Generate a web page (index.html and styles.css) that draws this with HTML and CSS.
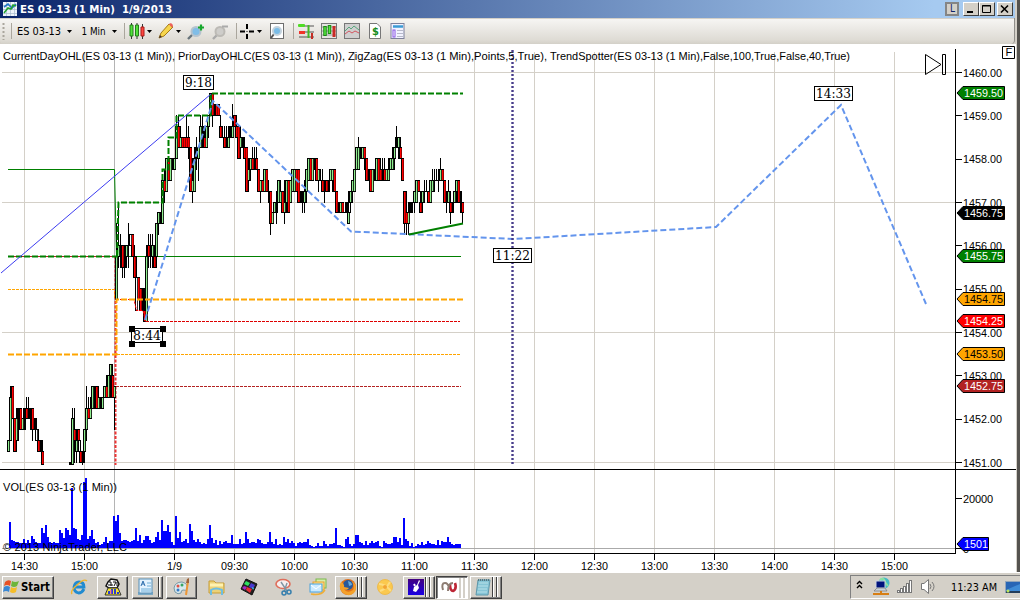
FILE: index.html
```html
<!DOCTYPE html>
<html lang="en">
<head>
<meta charset="utf-8">
<title>ES 03-13 (1 Min) 1/9/2013</title>
<link rel="stylesheet" href="styles.css">
</head>
<body>
<div class="window">
  <header class="titlebar">
    <svg class="app-icon" width="14" height="14" viewBox="0 0 14 14"><rect width="14" height="14" fill="#eef4fa"/><path d="M0 3.5H14M0 7.5H14M0 11.5H14M3.5 0V14M7.5 0V14M11.5 0V14" stroke="#a9bccf" stroke-width=".7"/><path d="M1 5L5 2L9 6L13 2" fill="none" stroke="#2176c9" stroke-width="1.6"/><path d="M1 11L5 6L8 7L10 3L13 4" fill="none" stroke="#21a32d" stroke-width="1.5"/></svg>
    <svg class="title-text" width="160" height="18"><text x="0" y="13" textLength="152" lengthAdjust="spacingAndGlyphs" xml:space="preserve">ES 03-13 (1 Min)  1/9/2013</text></svg>
    <div class="caption-buttons">
      <span class="cap link-btn">L</span>
      <span class="cap"><svg width="12" height="10"><path d="M2 8H8" stroke="#000" stroke-width="2"/></svg></span>
      <span class="cap"><svg width="12" height="10"><path d="M1.500 1.500H9.500V8.500H1.500ZM1 2H10" fill="none" stroke="#000"/></svg></span>
      <span class="cap close"><svg width="12" height="10"><path d="M2 1.500L9 8.500M9 1.500L2 8.500" stroke="#000" stroke-width="1.600"/></svg></span>
    </div>
  </header>

  <nav class="toolbar">
    <svg width="13" height="26"><path d="M3.500 5V22" stroke="#aaa69d" stroke-width="2" stroke-dasharray="2 2"/><path d="M11.500 5V21" stroke="#aaa69d"/></svg>
    <svg width="62" height="26"><text x="4" y="17" textLength="44" lengthAdjust="spacingAndGlyphs">ES 03-13</text><path d="M54 12H59L56.500 15Z"/></svg>
    <svg width="50" height="26"><text x="6.500" y="17" textLength="24" lengthAdjust="spacingAndGlyphs">1 Min</text><path d="M37 12H42L39.500 15Z"/><path d="M49.500 5V21" stroke="#aaa69d"/></svg>
    <svg width="30" height="26"><path d="M6.500 5V21M12 5V21M17.500 6V21" stroke="#333"/><path d="M5 7H8V18H5Z" fill="#50e33a" stroke="#257c1c"/><path d="M10.500 7H13.500V18H10.500Z" fill="#50e33a" stroke="#257c1c"/><path d="M16 9H19V18H16Z" fill="#ff4740" stroke="#a71c18"/><path d="M22 12H27L24.500 15Z"/></svg>
    <svg width="30" height="26"><path d="M4 20L6 15L14 6L18 9L9 18Z" fill="#f6d54c" stroke="#a47b17"/><path d="M14 6L16 5L18 7L17 10Z" fill="#ed625c"/><path d="M4 20L5 17L7 19Z" fill="#433"/><path d="M21 12H26L23.500 15Z"/></svg>
    <svg width="26" height="26"><path d="M3 21L8 16" stroke="#68747b" stroke-width="2.400"/><circle cx="11" cy="13.500" r="4.500" fill="#80bde7" stroke="#b5c3ce" stroke-width="2"/><path d="M13 9.500H19M16 6.500V12.500" stroke="#16a72d" stroke-width="2.200"/></svg>
    <svg width="29" height="26"><path d="M2 21L7 16" stroke="#aaa" stroke-width="2.400"/><circle cx="9" cy="13.500" r="4.500" fill="#cecdca" stroke="#bcbab5" stroke-width="2"/><path d="M11 8.500H17" stroke="#aaa" stroke-width="2"/><path d="M25.500 5V21" stroke="#aaa69d"/></svg>
    <svg width="28" height="26"><path d="M0 13.500H5M9 13.500H14M7 6V11M7 16V21" stroke="#000" stroke-width="2"/><path d="M6.500 13.500H7.500" stroke="#000"/><path d="M17 12H22L19.500 15Z"/></svg>
    <svg width="30" height="26"><rect x="2.500" y="5.500" width="13" height="15" fill="#fff" stroke="#6e6e6e"/><path d="M3 20L6 16" stroke="#555" stroke-width="2"/><circle cx="9" cy="13" r="4" fill="#79bce7" stroke="#c2d2dd" stroke-width="2"/><path d="M25.500 5V21" stroke="#aaa69d"/></svg>
    <svg width="23" height="26"><path d="M1 8H16M1 14H16M1 19H16" stroke="#555"/><rect x="0" y="6" width="7" height="3" rx="1" fill="#4fdc24"/><rect x="1" y="13" width="6" height="3" fill="#f13329"/><path d="M10.500 7V20" stroke="#44b925" stroke-width="2"/><path d="M14 15V21" stroke="#c52d24" stroke-width="2"/></svg>
    <svg width="23" height="26"><rect x=".5" y="5.500" width="15" height="15" fill="#e5e5e1" stroke="#777"/><path d="M1 9H15M1 13H15M1 17H15" stroke="#999"/><path d="M4 8V18M8.500 7V16" stroke="#1b8715" stroke-width="3.500"/><path d="M4 9V17M8.500 8V15" stroke="#55e83e" stroke-width="1.500"/><path d="M13 8V19" stroke="#c92a25" stroke-width="3"/></svg>
    <svg width="23" height="26"><rect x=".5" y="5.500" width="15" height="15" fill="#cfcfcf" stroke="#777"/><path d="M1 13L5 9L7 11L10 8L15 12" fill="none" stroke="#58a77c"/><path d="M1 16L5 13L8 15L11 13L15 15" fill="none" stroke="#d35560"/></svg>
    <svg width="23" height="26"><path d="M2.500 5.500H10L13.500 9V20.500H2.500Z" fill="#fff" stroke="#777"/><text class="dollar" x="5" y="17">$</text></svg>
    <svg width="20" height="26"><rect x="1" y="5.500" width="13" height="15" fill="#f2f3ff" stroke="#7d809a"/><path d="M3 8.500H13" stroke="#3b9bd5" stroke-width="2.500"/><rect x="3" y="12" width="2" height="7" fill="#fff" stroke="#8653e5"/><path d="M7 12.500H13M7 15.500H13M7 18.500H13" stroke="#b7b9ca"/></svg>
  </nav>

  <svg class="chart" id="chart" width="1016" height="528" viewBox="0 44 1016 528"></svg>
</div>

<footer class="taskbar">
  <div class="task start"><svg width="52" height="23"><path d="M3 6Q6 3 9 5L8 10Q5 8 2 10Z" fill="#e85125"/><path d="M10 5Q13 7 17 5L15 10Q12 12 9 10Z" fill="#6eb53b"/><path d="M2 11Q5 9 8 11L7 16Q4 14 1 16Z" fill="#3987d4"/><path d="M9 11Q12 13 15 11L14 16Q11 18 8 16Z" fill="#f5bd28"/><text x="19" y="15" textLength="29" lengthAdjust="spacingAndGlyphs">Start</text></svg></div>
  <svg class="ico browser" viewBox="0 0 18 18"><path d="M14 11Q12 15 8.500 15Q4 14 4 9Q5 4 9 4Q14 4 14 9H5" fill="none" stroke="#218bd0" stroke-width="2.800"/><path d="M2 16Q0 13 7 7Q14 0 17 3" fill="none" stroke="#f1b52b" stroke-width="1.400"/></svg>
  <div class="task"><svg class="ico" viewBox="0 0 18 18"><path d="M4 4L7 1L13 2L15 6L13 10H5L2 8Z" fill="#fff" stroke="#111" stroke-width="1.500"/><path d="M5 4H7V8M9 4H12L10 8M4 7H9M13 4V8" fill="none" stroke="#111"/><path d="M4 10H14L17 17H1Z" fill="#f6e62c" stroke="#333"/><path d="M5 16V13M8 16V11M11 16V11M14 16V14" stroke="#293cd0" stroke-width="2"/><path d="M7 16V12" stroke="#e33bc2"/></svg></div>
  <div class="task stack one"><svg class="ico" viewBox="0 0 18 18"><path d="M2 14H17V17H2Z" fill="#7ca9c4"/><rect x="3" y="1" width="13" height="14" fill="#e3f2fd" stroke="#5690b9"/><path d="M11 5H15M11 8H15M5 11H15M5 13H15" stroke="#6eafd8"/><path d="M5 8L7 3L9 8M6 6H8" fill="none" stroke="#2d6dac"/></svg></div>
  <div class="task"><svg class="ico" viewBox="0 0 18 18"><path d="M1 10Q2 4 9 4Q16 6 14 11Q13 13 10 12Q8 12 8 15Q5 17 2 14Z" fill="#d7e8ed" stroke="#7798a5"/><circle cx="5" cy="8" r="1.500" fill="#df5347"/><circle cx="9" cy="7" r="1.500" fill="#37a563"/><circle cx="5" cy="12" r="1.500" fill="#377ac6"/><path d="M15 3L13 17" stroke="#ec9634" stroke-width="2"/><path d="M14 1L16 0V5H13Z" fill="#9e643b"/></svg></div>
  <svg class="ico" viewBox="0 0 18 18"><path d="M2 3H7L9 5H17V15H2Z" fill="#ecd179" stroke="#c79d36"/><path d="M3 7H16" stroke="#fff2b0" stroke-width="3"/><path d="M4 17V12Q9 9 15 12V17" fill="none" stroke="#6ebee1" stroke-width="2"/></svg>
  <svg class="ico" viewBox="0 0 18 18"><path d="M6 1L17 6L12 17L1 11Z" fill="#222" stroke="#111"/><path d="M6 3L10 5L8 8L4 6Z" fill="#2de061"/><path d="M11 5L15 7L13 11L9 9Z" fill="#4a3ad0"/><path d="M4 8L7 9L5 12L2 10Z" fill="#a528c8"/><path d="M7 9L12 11L10 15L6 12Z" fill="#e32d36"/><path d="M12 9L14 10L13 12Z" fill="#34d8e0"/></svg>
  <svg class="ico" viewBox="0 0 18 18"><ellipse cx="8" cy="6" rx="7" ry="4.500" fill="#f6eeee" stroke="#df6e5b" stroke-width="1.600"/><path d="M6 4L12 13M12 5L9 14" stroke="#8095a4" stroke-width="1.400"/><circle cx="14" cy="14" r="2" fill="none" stroke="#367fad" stroke-width="1.500"/><circle cx="9" cy="15" r="2" fill="none" stroke="#367fad" stroke-width="1.500"/></svg>
  <svg class="ico" viewBox="0 0 18 18"><rect x="7" y="1" width="10" height="9" fill="#d9edaa" stroke="#79b94c"/><rect x="4" y="4" width="11" height="8" fill="#ffe392" stroke="#e7a02e"/><rect x="1" y="6" width="12" height="8" fill="#cbeaff" stroke="#4aa2dc"/><path d="M2 7L7 11L12 7" fill="none" stroke="#fff"/><path d="M2 16Q12 18 16 12" fill="none" stroke="#efae38" stroke-width="1.500"/></svg>
  <div class="task stack three"><svg class="ico" viewBox="0 0 18 18"><circle cx="9" cy="9" r="8" fill="#de701c"/><circle cx="9" cy="7" r="5" fill="#28589b"/><path d="M2 4Q6 6 5 9L10 10Q8 13 5 11Q8 16 14 12Q16 8 13 3Q20 9 15 15Q9 20 3 14Q-1 9 2 4Z" fill="#f4a12a"/><path d="M9 3Q13 4 13 7L10 8Z" fill="#67abd9"/></svg></div>
  <svg class="ico" viewBox="0 0 18 18"><circle cx="9" cy="9" r="7.500" fill="#fbc94e" stroke="#eebb4d"/><path d="M3 6Q9 6 15 13M4 13Q10 11 14 4" fill="none" stroke="#fddc80" stroke-width="2"/><circle cx="9" cy="9" r="2" fill="#f2a434"/></svg>
  <div class="task stack three"><svg class="ico" viewBox="0 0 18 18"><defs><linearGradient id="violet" x2="0" y2="1"><stop stop-color="#42007f"/><stop offset="1" stop-color="#1900e4"/></linearGradient></defs><rect x="1" y="1" width="16" height="16" fill="url(#violet)"/><path d="M12 2L13 3L11 7L12 10L9 14L6 13L7 9L10 7Z" fill="#fff"/><path d="M7 6L8 8" stroke="#fff" stroke-width="2"/></svg></div>
  <div class="task stack pressed"><svg class="ico" viewBox="0 0 18 18"><path d="M10 6Q10 13 13 13Q17 11 15 5" fill="none" stroke="#bd2635" stroke-width="2.600"/><path d="M3 12Q1 5 5 5Q8 5 9 10M8 13Q8 5 13 5" fill="none" stroke="#8d7c72" stroke-width="2"/></svg></div>
  <div class="task stack three"><svg class="ico" viewBox="0 0 18 18"><path d="M4 2H16L14 17H2Z" fill="#87c5d6" stroke="#5e97aa"/><path d="M5 5H14M4 8H14M4 11H13M3 14H13" stroke="#b8e1e9"/><path d="M4 2H16" stroke="#547681" stroke-width="2" stroke-dasharray="1 1"/></svg></div>
  <div class="tray">
    <svg width="169" height="22"><path d="M6 8L8.500 5.500L11 8M6 12L8.500 9.500L11 12" fill="none" stroke="#000" stroke-width="1.400"/>
      <circle cx="33" cy="7" r="5.500" fill="#45b9c7"/><path d="M29 4Q33 1 34 6L37 10" stroke="#8be0a0" fill="none" stroke-width="2"/><rect x="25" y="5" width="9" height="7" fill="#00127c" stroke="#cbd3e2"/><path d="M23 15L26 12H34L36 15Z" fill="#cbd3da" stroke="#777" stroke-width=".7"/><path d="M22 18H38M30 15V18" stroke="#d77e14" stroke-width="2"/>
      <g fill="#fff" stroke="#777"><rect x="46.500" y="14.500" width="2" height="2"/><rect x="49.500" y="12.500" width="2" height="4"/><rect x="52.500" y="10.500" width="2" height="6"/><rect x="55.500" y="7.500" width="2" height="9"/><rect x="58.500" y="4.500" width="2" height="12"/></g>
      <path d="M70.500 7.500H73L77.500 3.500V17.500L73 13.500H70.500Z" fill="#fff" stroke="#777"/><path d="M79 8Q81 10.500 79 13M81 6Q85 10.500 81 15" fill="none" stroke="#777"/>
      <text x="100" y="15" textLength="46" lengthAdjust="spacingAndGlyphs">11:23 AM</text>
      <rect x="154.500" y="5.500" width="16" height="11" fill="#2865b5" stroke="#93a5b9"/><path d="M155 14L171 7V16H155Z" fill="#3f8bd6"/><path d="M155 16H171" stroke="#233d5b" stroke-width="2"/><circle cx="157" cy="15" r="1.500" fill="#bde55a"/></svg>
  </div>
</footer>
<script src="chart.js"></script>
</body>
</html>
```
FILE: styles.css
```css
* { box-sizing: border-box; }
body { margin: 0; width: 1020px; height: 600px; overflow: hidden; background: #d4d0c8; font-family: "DejaVu Sans Condensed", "DejaVu Sans", sans-serif; }
svg { display: block; }
.window { width: 1020px; height: 572px; display: flex; flex-direction: column; border-right: 3px solid #55534f; background: #d4d0c8; }
.titlebar { height: 18px; width: 1015px; display: flex; align-items: center; background: linear-gradient(90deg, #0a246a, #a6caf0 92%); }
.app-icon { margin: 0 3px; }
.title-text { font-size: 11px; font-weight: 700; fill: #fff; }
.caption-buttons { margin-left: auto; display: flex; padding-right: 2px; }
.cap { width: 16px; height: 14px; padding: 1px; background: #d4d0c8; border: 1px solid; border-color: #fff #404040 #404040 #fff; }
.cap.close { margin-left: 2px; }
.link-btn { width: 14px; margin-right: 4px; border: 2px solid #858585; padding: 0 3px; font: 10px/10px "DejaVu Sans Condensed", sans-serif; color: #0a246a; }
.toolbar { width: 1015px; height: 26px; display: flex; border-radius: 0 0 4px 4px; border-right: 1px solid #8f8d89; background: linear-gradient(#d4d0c8 1px, #f6f5f3 1px, #dedbd4 85%, #d3d0c8); font-size: 11px; }
.toolbar svg { flex: none; }
.toolbar .dollar { font-size: 11px; font-weight: 700; fill: #168c20; }
.chart { background: #fff; font: 11px "Liberation Sans", Arial, sans-serif; }
.grid-line { stroke: #d4d0c8; }
.axis { stroke: #000; }
.line { fill: none; }
.note { font: 13px "DejaVu Serif", serif; }
.taskbar { height: 28px; display: grid; align-items: center; justify-items: center; padding-top: 1px; border-top: 1px solid #fff; background: #d4d0c8; grid-template-columns: 56px 38px 37px 32px 37px 32px 34px 36px 32px 33px 36px 31px 35px 34px 1fr; }
.ico { width: 18px; height: 18px; }
.browser { margin-left: 8px; }
.task { height: 23px; width: 31px; display: flex; align-items: center; justify-content: center; border: 1px solid; border-color: #fff #404040 #404040 #fff; box-shadow: inset -1px -1px #808080; }
.start { width: 52px; font: 700 11.5px "DejaVu Sans Condensed", sans-serif; }
.start svg { flex: none; }
.stack { justify-content: flex-start; padding-left: 3px; }
.one { background: linear-gradient(90deg, transparent 25px, #404040 25px 26px, #fff 26px 27px, transparent 27px); }
.three { width: 32px; background: linear-gradient(90deg, transparent 21px, #404040 21px 22px, #fff 22px 23px, transparent 23px 25px, #404040 25px 26px, #fff 26px 27px, transparent 27px); }
.pressed { width: 32px; border-color: #404040 #fff #fff #404040; background: linear-gradient(90deg, #fff 22px, #d4d0c8 22px 24px, #fff 24px 26px, #d4d0c8 26px 28px, #fff 28px); box-shadow: inset 1px 1px #808080; }
.tray { justify-self: end; width: 170px; height: 24px; border: 1px solid; border-color: #808080 #808080 #fff #808080; border-right: 0; font-size: 11px; }
```
FILE: chart.js
```javascript
const chart = document.getElementById('chart');
const NS = 'http://www.w3.org/2000/svg';

function add(name, attrs, text) {
  const node = document.createElementNS(NS, name);
  for (const key in attrs) node.setAttribute(key, attrs[key]);
  if (text !== undefined) node.textContent = text;
  chart.appendChild(node);
  return node;
}
function line(x1, y1, x2, y2, cls) {
  add('line', { x1, y1, x2, y2, class: cls });
}
function path(d, color, width, dash) {
  const a = { d, stroke: color, 'stroke-width': width, class: 'line' };
  if (dash) a['stroke-dasharray'] = dash;
  add('path', a);
}

// Grid and session break
const times = ['14:30', '15:00', '1/9', '09:30', '10:00', '10:30', '11:00', '11:30', '12:00', '12:30', '13:00', '13:30', '14:00', '14:30', '15:00'];
const timeX = times.map((t, i) => (i < 2 ? 24.5 + i * 60 : 174.5 + (i - 2) * 60));
timeX.forEach(x => line(x, 52, x, 553, 'grid-line'));
[72.5, 202.5, 332.5, 462.5].forEach(y => line(2, y, 955, y, 'grid-line'));
path('M114.500 52V553', '#b4b4b4', 1);
path('M2 548.500H955', '#aaa', 1);

// Daily levels
path('M8 169.500H114.500L116.500 256.500H461', '#008000', 1);
path('M8 289.500H114.500V299', '#ffa500', 1, '3 1');
path('M117 354.500H461', '#ffa500', 1, '3 1');
path('M115.500 256V465', '#e33', 2, '3 1.500');
path('M116 386.500H461', '#b22222', 1, '3 1');
path('M8 256.500H116', '#b22222', 1);

// Candles: x, high, body top, body bottom, low (ticks below 1459.50), colour
const candles = `8 32 32 33 33 g|10 27 28 32 32 g|12 27 27 30 30 r|14 30 30 33 33 r|16 29 30 32 33 g|18 29 29 31 32 k|20 29 29 31 31 r|22 30 30 31 31 g|24 29 29 31 31 k|26 28 29 30 30 r|28 28 29 30 30 k|30 29 29 30 31 k|32 29 29 31 32 r|34 30 30 31 31 k|36 30 31 32 32 w|38 31 32 33 33 r|40 32 32 33 33 k|42 32 33 36 36 r
70 34 34 36 36 k|72 29 30 36 36 g|74 29 31 32 34 r|76 31 32 33 34 g|78 31 31 32 33 r|80 32 33 34 34 r|82 33 33 34 35 k|84 31 31 33 34 g|86 27 29 31 32 g|88 28 29 30 30 r|90 28 29 30 30 g|92 27 27 29 29 g|94 27 27 29 29 k|96 27 27 29 29 r|98 27 28 29 29 g|100 28 28 29 29 k|102 28 28 29 29 g|104 27 27 28 28 g|106 26 27 28 28 r|108 26 26 28 28 g|110 25 25 26 28 g|112 25 26 28 28 r|114 27 27 28 31 g
116 12 15 19 19 g|118 10 14 15 16 g|120 13 14 15 16 k|122 14 14 16 17 r|124 14 14 16 17 k|126 14 14 15 16 g|128 12 14 14 16 k|130 13 13 14 14 w|132 13 13 15 15 r|134 14 15 17 17 r|136 15 17 20 20 w|138 17 17 19 19 r|140 18 18 20 20 r|142 18 18 20 20 k|144 18 20 21 21 r|146 14 15 21 21 g|148 13 14 15 16 r|150 13 14 15 16 k|152 13 14 15 16 g|154 14 15 16 16 r|156 12 12 15 16 g|158 11 11 12 13 g|160 11 11 12 12 k|162 8 8 12 12 g|164 7 8 9 10 r|166 6 6 9 9 g|168 6 6 8 8 r|170 6 6 8 8 g|172 6 6 7 7 k|174 6 6 7 7 g|176 2 3 6 6 g|178 2 3 5 5 r|180 3 4 5 5 g|182 4 4 5 5 r|184 4 4 5 5 r|186 2 4 5 5 r|188 3 4 5 6 r|190 5 5 9 9 r|192 6 8 9 10 g|194 5 6 9 9 g|196 4 5 6 7 k|198 5 5 6 8 g|200 2 3 5 5 g|202 2 3 4 5 k|204 3 4 5 5 r|206 3 3 5 5 g|208 2 2 3 4 g|210 0 0 2 2 g|212 0 0 2 3 r|214 1 1 2 2 k|216 1 1 2 2 r|218 1 1 2 2 r|220 2 3 4 4 r|222 3 4 4 4 k|224 3 4 5 5 r|226 3 4 5 5 k|228 3 4 5 5 g|230 3 3 4 4 k|232 1 3 4 4 g|234 2 2 3 3 r|236 2 3 4 4 r|238 3 3 6 6 r|240 3 4 5 6 g|242 4 4 5 5 k|244 4 5 6 6 r|246 5 5 9 9 r|248 6 7 8 9 g|250 6 6 7 8 g|252 5 6 7 7 r|254 5 6 7 7 k|256 5 6 7 7 r|258 7 7 9 9 r|260 8 8 9 10 g|262 8 8 9 9 r|264 7 7 9 9 g|266 7 7 9 9 r|268 8 9 9 10 k|270 9 9 12 13 r|272 11 11 12 12 g|274 10 10 11 11 g|276 9 10 11 12 k|278 8 8 10 10 g|280 8 9 10 10 g|282 9 9 11 11 r|284 8 10 11 12 g|286 8 8 10 11 g|288 8 8 11 11 r|290 8 8 10 10 g|292 7 7 9 9 g|294 7 7 9 9 g|296 7 7 9 9 r|298 7 7 10 10 r|300 9 9 10 10 k|302 9 10 10 11 k|304 8 9 10 11 g|306 7 7 9 10 g|308 6 6 8 8 g|310 6 6 8 8 r|312 6 6 8 8 g|314 6 6 7 7 k|316 6 6 8 8 r|318 7 7 8 9 g|320 7 8 8 8 k|322 7 8 9 9 r|324 8 8 9 10 k|326 8 8 9 9 r|328 8 8 9 9 k|330 7 7 8 8 g|332 7 7 8 9 g|334 7 7 9 9 r|336 9 9 11 11 r|338 10 10 11 11 k|340 10 10 11 11 g|342 10 10 11 11 r|344 11 11 11 11 k|346 10 10 11 11 k|348 9 11 12 12 g|350 9 9 10 11 g|352 8 8 9 10 g|354 7 7 9 9 g|356 5 5 7 7 g|358 4 5 7 7 g|360 5 5 6 6 k|362 5 5 6 6 g|364 5 5 6 7 r|366 6 6 8 8 r|368 7 7 8 8 k|370 7 7 9 9 r|372 7 7 9 9 g|374 7 7 8 8 k|376 6 6 8 8 g|378 6 6 8 8 r|380 6 7 8 8 r|382 6 7 8 8 k|384 6 7 8 8 r|386 7 7 8 8 g|388 6 7 8 8 g|390 6 6 7 7 g|392 5 6 7 7 g|394 5 5 6 7 g|396 3 4 5 5 k|398 4 4 5 6 g|400 4 5 6 6 r|402 6 6 8 8 r|404 9 9 12 13 r|406 9 11 12 13 r|408 10 11 12 13 g|410 10 10 11 11 k|412 10 10 10 11 k|414 9 9 10 11 g|416 8 8 10 10 g|418 8 8 9 9 r|420 9 10 11 11 r|422 9 9 10 11 g|424 8 9 9 10 k|426 8 9 9 9 k|428 9 9 10 10 r|430 8 8 10 10 g|432 7 8 9 9 g|434 7 8 8 9 k|436 7 8 8 8 k|438 7 8 8 9 k|440 6 7 8 8 g|442 7 7 8 8 r|444 8 8 10 10 r|446 9 9 10 11 k|448 8 9 10 10 g|450 9 10 11 12 r|452 10 10 11 11 k|454 9 9 10 10 g|456 8 8 9 10 g|458 8 8 10 10 r|460 9 9 10 11 k|462 10 10 11 12 r`;
const fills = { g: '#90ee90', r: '#f00', k: '#000', w: '#fff' };
const level = t => Math.min(464, Math.round(93.2 + t * 10.84));
const bodies = [];
candles.split(/[|\n]/).forEach(row => {
  const [x, h, a, b, l, c] = row.trim().split(' ');
  const cx = Number(x);
  const hi = level(h), top = level(a), bottom = level(b), low = level(l);
  add('rect', { x: cx, y: hi, width: 1, height: low - hi + 1 });
  add('rect', { x: cx - 1, y: top, width: 3, height: bottom - top + 1 });
  if (bottom > top + 1 && c !== 'k') bodies.push({ x: cx, y: top + 1, width: c === 'r' ? 1.6 : 1.2, height: bottom - top - 1, fill: fills[c] });
});
bodies.forEach(b => add('rect', b));

// Current-day lines and trend drawings
path('M8 256.500H117V250', '#008000', 2, '6 2');
path('M117 256L118.500 202.500H162.500V169.500H168.500V137.500H176.500V115.500H210.500V93.500H463', '#008000', 2, '6 2');
path('M116 299.500H134L136.500 310.500H143L145.500 321.500', '#f00', 1, '3 1');
path('M146 321.500H460', '#d00', 1, '3 1');
path('M8 354.500H116.500V299.500H463', '#ffa500', 2, '6 2');
path('M1 273L211 94', '#3c3cf0', 1);
path('M145 320L213 101L351 231.500L514 239L716 227L841 105L926 304', '#6495ed', 2, '6 3');
path('M409 234.500L463 223.500', '#008000', 2);
path('M512.500 50V465', '#483d8b', 2.4, '2 2');

// Volume
const volume = [26,8,7,6,6,5,5,9,5,8,5,12,9,6,5,5,20,15,23,11,6,5,6,5,5,18,15,10,20,18,13,60,20,19,9,8,13,66,70,9,12,18,9,5,6,3,4,6,11,5,7,7,32,27,33,15,7,8,8,7,6,7,8,20,7,13,5,8,12,12,8,5,6,11,16,8,28,17,17,23,16,6,3,32,10,16,6,7,9,5,24,17,8,6,9,6,4,5,4,9,23,10,5,8,3,7,4,6,7,5,5,13,4,4,4,9,4,5,16,9,5,6,6,5,9,8,5,4,4,6,16,6,4,9,3,4,3,11,6,9,5,7,5,2,5,6,5,6,6,9,3,2,1,2,5,2,2,7,4,2,4,4,5,20,3,3,2,1,9,11,4,2,4,13,13,6,5,3,7,3,5,7,5,6,7,2,1,7,5,4,4,5,11,11,6,10,3,30,9,7,2,5,1,2,4,3,6,3,4,7,5,4,4,3,8,3,7,6,6,11,6,4,3,4,4,4];
volume.forEach((v, i) => add('rect', { x: 9 + i * 2, y: 548 - v, width: 2, height: v, fill: '#00f' }));

// Axes
line(955.5, 49, 955.5, 554, 'axis');
line(0, 469.5, 1016, 469.5, 'axis');
line(0, 553.5, 956, 553.5, 'axis');
times.forEach((t, i) => {
  line(timeX[i], 554, timeX[i], 560, 'axis');
  const w = t === '1/9' ? 15 : 27;
  add('text', { x: timeX[i] - w / 2, y: 570, textLength: w, lengthAdjust: 'spacingAndGlyphs' }, t);
});
for (let i = 0; i < 10; i++) {
  const y = 72.5 + i * 43.34;
  line(955, Math.floor(y) + .5, 962, Math.floor(y) + .5, 'axis');
  add('text', { x: 963, y: y + 4, textLength: 39, lengthAdjust: 'spacingAndGlyphs' }, (1460 - i) + '.00');
}
line(955, 498.5, 962, 498.5, 'axis');
line(955, 548.5, 962, 548.5, 'axis');
add('text', { x: 963, y: 503, textLength: 30 }, '20000');
add('text', { x: 963, y: 553 }, '0');

[['1459.50', 93, '#008000', '#fff'], ['1456.75', 213, '#000', '#fff'], ['1455.75', 256, '#008000', '#fff'], ['1454.75', 299, '#ffa500', '#000'], ['1454.25', 321, '#f00', '#fff'], ['1453.50', 354, '#ffa500', '#000'], ['1452.75', 386, '#b22222', '#fff'], ['1501', 544, '#00f', '#fff']].forEach(([s, y, fill, ink]) => {
  const short = s === '1501';
  const right = short ? 988.5 : 1004.5;
  add('path', { d: `M957 ${y}L963 ${y - 6.5}H${right}V${y + 6.5}H963Z`, fill, stroke: '#000' });
  add('text', { x: 964, y: y + 4, fill: ink, textLength: short ? 24 : 39, lengthAdjust: 'spacingAndGlyphs' }, s);
});

// Captions
[['CurrentDayOHL(ES 03-13 (1 Min)),', 3, 172], ['PriorDayOHLC(ES 03-13 (1 Min)),', 178, 167], ['ZigZag(ES 03-13 (1 Min),Points,5,True),', 348, 199], ['TrendSpotter(ES 03-13 (1 Min),False,100,True,False,40,True)', 550, 300]].forEach(([s, x, w]) =>
  add('text', { x, y: 60, textLength: w, lengthAdjust: 'spacingAndGlyphs' }, s));
add('text', { x: 3, y: 491, textLength: 114 }, 'VOL(ES 03-13 (1 Min))');
add('text', { x: 3, y: 551, textLength: 124 }, '© 2013 NinjaTrader, LLC');

[['9:18', 183, 75, 30], ['14:33', 814, 86, 38], ['11:22', 493, 248, 38], ['8:44', 131, 328, 31]].forEach(([s, x, y, w]) => {
  add('rect', { x: x + .5, y: y + .5, width: w, height: 14, fill: '#fff', stroke: '#000' });
  add('text', { x: x + 2, y: y + 12, class: 'note', textLength: w - 3, lengthAdjust: 'spacingAndGlyphs' }, s);
});
[[129, 326], [160, 326], [129, 341], [160, 341]].forEach(([x, y]) => add('rect', { x, y, width: 6, height: 6 }));

// Scroll-to-end and fixed-scale controls
path('M925.500 54.500V74.500L941 64.500Z', '#000', 1);
path('M942.500 54.500H945.500V74.500H942.500Z', '#000', 1);
path('M1002.500 46.500H1014.500V58.500H1002.500Z', '#000', 1);
add('text', { x: 1005.5, y: 56 }, 'F');
```
